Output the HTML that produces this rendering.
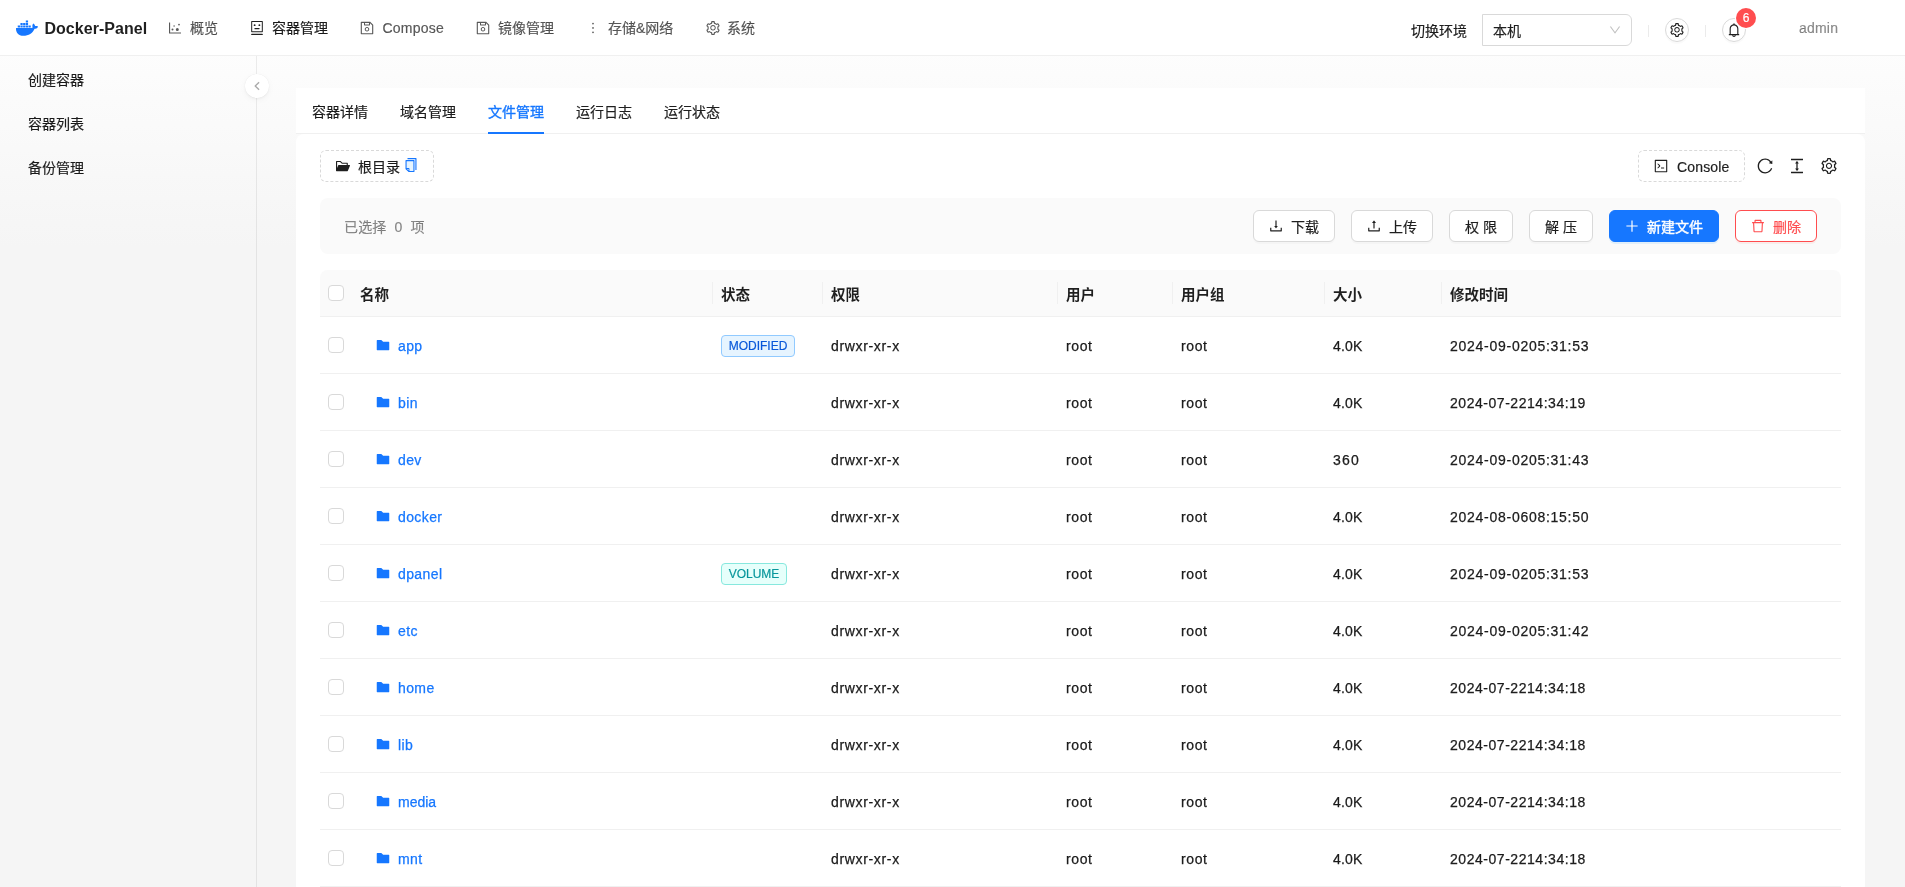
<!DOCTYPE html>
<html lang="zh-CN">
<head>
<meta charset="utf-8">
<title>Docker-Panel</title>
<style>
*{box-sizing:border-box;margin:0;padding:0}
html,body{width:1905px;height:887px;overflow:hidden}
body{-webkit-text-stroke:.18px currentColor;font-family:"Liberation Sans","Noto Sans CJK SC",sans-serif;font-size:14px;color:rgba(0,0,0,.88);background:linear-gradient(#fff,#f5f5f5 28%);position:relative}
svg{display:block}
#app{position:absolute;left:0;top:0;width:1905px;height:887px;will-change:transform}
.abs{position:absolute}
.i{position:absolute}
/* header */
#hdr{position:absolute;left:0;top:0;width:1905px;height:56px;background:#fff;border-bottom:1px solid #f0f0f0;color:rgba(0,0,0,.65)}
#hdr .t{position:absolute;top:0;height:56px;line-height:56px;white-space:nowrap;color:rgba(0,0,0,.65);font-size:14px}
#logo-t{-webkit-text-stroke:0;position:absolute;left:44px;top:0;height:56px;line-height:57px;font-size:16px;font-weight:700;color:rgba(0,0,0,.88);white-space:nowrap}
.circ{position:absolute;width:24px;height:24px;border:1px solid #d9d9d9;border-radius:50%;background:#fff;box-shadow:0 2px 0 rgba(0,0,0,.02)}
.badge{position:absolute;left:1736px;top:8px;width:20px;height:20px;border-radius:10px;background:#ff4d4f;color:#fff;font-size:12px;line-height:21px;text-align:center;box-shadow:0 0 0 1px #fff}
/* sidebar */
#side{position:absolute;left:0;top:56px;width:257px;height:831px;border-right:1px solid rgba(5,5,5,.07)}
#side .m{position:absolute;left:28px;height:22px;line-height:22px;font-size:14px;color:rgba(0,0,0,.88);white-space:nowrap}
#col{position:absolute;left:245px;top:74px;width:24px;height:24px;border-radius:50%;background:#fff;box-shadow:0 2px 8px -2px rgba(25,15,15,.07),0 1px 4px -1px rgba(25,15,15,.07),0 0 1px 0 rgba(25,15,15,.1)}
/* main */
#main{position:absolute;left:257px;top:56px;width:1648px;height:831px}
#card{position:absolute;left:296px;top:88px;width:1569px;height:799px}
#cbody{position:absolute;left:0;top:46px;width:1569px;height:760px;background:#fff;border-radius:8px}
#tabs{position:absolute;left:0;top:0;width:1569px;height:46px;background:#fff;border-bottom:1px solid #f0f0f0}
#tabs .tab{position:absolute;top:13px;height:22px;line-height:22px;font-size:14px;white-space:nowrap;color:rgba(0,0,0,.88)}
#tabs .tab.on{color:#1677ff;-webkit-text-stroke:.35px currentColor}
#ink{position:absolute;left:192px;top:44px;width:56px;height:2px;background:#1677ff}
.dash{position:absolute;border:1px dashed #d9d9d9;border-radius:6px;background:#fff;height:32px;line-height:30px;font-size:14px;white-space:nowrap}
#bar{position:absolute;left:24px;top:110px;width:1521px;height:56px;background:#fafafa;border-radius:8px}
.btn{position:absolute;top:12px;height:32px;border:1px solid #d9d9d9;border-radius:6px;background:#fff;font-size:14px;line-height:30px;white-space:nowrap;box-shadow:0 2px 0 rgba(0,0,0,.02);color:rgba(0,0,0,.88)}
.btn span{position:absolute;top:1px}
.btn.pri span{-webkit-text-stroke:.4px currentColor}
.btn.pri{background:#1677ff;border-color:#1677ff;color:#fff;box-shadow:0 2px 0 rgba(5,145,255,.1)}
.btn.dng{border-color:#ff4d4f;color:#ff4d4f;box-shadow:0 2px 0 rgba(255,38,5,.06)}
/* table */
#th{position:absolute;left:24px;top:182px;width:1521px;height:47px;background:#fafafa;border-bottom:1px solid #f0f0f0;border-radius:8px 8px 0 0}
#th .h{position:absolute;top:14px;height:22px;line-height:22px;font-weight:700;font-size:14.5px;white-space:nowrap;-webkit-text-stroke:0}
#th .sp{position:absolute;top:12px;width:1px;height:22px;background:#f0f0f0}
.cb{position:absolute;width:16px;height:16px;border:1px solid #d9d9d9;border-radius:4px;background:#fff}
.row{position:absolute;left:24px;width:1521px;height:57px;border-bottom:1px solid #f0f0f0}
.row .c{-webkit-text-stroke:.25px currentColor;position:absolute;top:18px;height:22px;line-height:22px;font-size:14px;white-space:nowrap;color:rgba(0,0,0,.88)}
.row .n{color:#1677ff;letter-spacing:.4px}
.row .p{letter-spacing:.66px}
.row .u{letter-spacing:.6px;margin-left:1px}
.row .z{letter-spacing:.2px;margin-left:1px}
.row .d{letter-spacing:.73px;margin-left:1px}
.tag{position:absolute;left:401px;top:18px;height:22px;line-height:20px;font-size:12px;text-align:center;border-radius:4px;border:1px solid;white-space:nowrap}
.tag.b{color:#0958d9;background:#e6f4ff;border-color:#91caff}
.tag.c2{color:#08979c;background:#e6fffb;border-color:#87e8de}

</style>
</head>
<body>
<div id="app">
<div id="main"></div>
<div id="side">
  <div class="m" style="top:13px">创建容器</div>
  <div class="m" style="top:57px">容器列表</div>
  <div class="m" style="top:101px">备份管理</div>
</div>
<div id="hdr">
  <svg class="i" style="left:16px;top:17px" width="22" height="22" viewBox="64 64 896 896" fill="#1677ff"><path d="M555.88 488.24h-92.62v-82.79h92.62zm0-286.24h-92.62v85.59h92.62zm109.45 203.45H572.700v82.79h92.620zm-218.900-101.020h-92.610v84.180h92.600zm109.450 0h-92.610v84.180h92.600zm388.690 140.300c-19.650-14.020-67.360-18.230-102.440-11.220-4.210-33.670-23.850-63.140-57.530-89.800l-19.650-12.620-12.620 19.640c-25.260 39.290-32.280 103.830-5.620 145.920-12.630 7.020-36.480 15.440-67.350 15.440H67.560c-12.630 71.560 8.420 164.160 61.740 227.300C181.220 801.130 259.800 832 360.830 832c220.300 0 384.480-101.020 460.250-286.240 29.470 0 95.420 0 127.700-63.140 1.400-2.800 9.820-18.240 11.220-23.850zm-717.040-39.280h-92.610v82.790h92.600zm109.450 0h-92.610v82.790h92.600zm109.450 0h-92.610v82.790h92.600zM336.980 304.430h-92.610v84.190h92.600z"/></svg>
  <div id="logo-t" style="left:44.4px;letter-spacing:.05px">Docker-Panel</div>
  <svg class="i" style="left:168px;top:21px" width="14" height="14" viewBox="64 64 896 896" fill="currentColor"><path d="M888 792H200V168c0-4.400-3.600-8-8-8h-56c-4.400 0-8 3.600-8 8v688c0 4.400 3.600 8 8 8h752c4.400 0 8-3.600 8-8v-56c0-4.400-3.600-8-8-8zM288 604a64 64 0 1 0 128 0 64 64 0 1 0-128 0zm118-224a48 48 0 1 0 96 0 48 48 0 1 0-96 0zm158 228a96 96 0 1 0 192 0 96 96 0 1 0-192 0zm148-314a56 56 0 1 0 112 0 56 56 0 1 0-112 0z"/></svg>
  <div class="t" style="left:190px">概览</div>
  <svg class="i" style="left:250px;top:21px" width="14" height="14" viewBox="64 64 896 896" fill="rgba(0,0,0,.88)"><path d="M300 328a60 60 0 1 0 120 0 60 60 0 1 0-120 0zM852 64H172c-17.700 0-32 14.300-32 32v660c0 17.700 14.300 32 32 32h680c17.700 0 32-14.300 32-32V96c0-17.700-14.300-32-32-32zm-32 660H204V128h616v596zM604 328a60 60 0 1 0 120 0 60 60 0 1 0-120 0zm250.200 556H169.800c-16.500 0-29.800 14.300-29.800 32v36c0 4.400 3.300 8 7.400 8h729.100c4.100 0 7.400-3.600 7.400-8v-36c.1-17.700-13.200-32-29.700-32zM664 508H360c-4.400 0-8 3.600-8 8v60c0 4.400 3.600 8 8 8h304c4.400 0 8-3.600 8-8v-60c0-4.400-3.600-8-8-8z"/></svg>
  <div class="t" style="left:272px;color:rgba(0,0,0,.88)">容器管理</div>
  <svg class="i" style="left:360px;top:21px" width="14" height="14" viewBox="64 64 896 896" fill="currentColor"><path d="M893.300 293.300L730.700 130.700c-7.500-7.500-16.700-13-26.700-16V112H144c-17.700 0-32 14.300-32 32v736c0 17.700 14.300 32 32 32h736c17.700 0 32-14.300 32-32V338.500c0-17-6.700-33.200-18.700-45.200zM384 184h256v104H384V184zm456 656H184V184h136v136c0 17.700 14.300 32 32 32h320c17.700 0 32-14.300 32-32V205.800l136 136V840zM512 442c-79.500 0-144 64.500-144 144s64.500 144 144 144 144-64.500 144-144-64.500-144-144-144zm0 224c-44.200 0-80-35.800-80-80s35.800-80 80-80 80 35.800 80 80-35.800 80-80 80z"/></svg>
  <div class="t" style="left:382.4px;letter-spacing:.26px">Compose</div>
  <svg class="i" style="left:476px;top:21px" width="14" height="14" viewBox="64 64 896 896" fill="currentColor"><path d="M893.300 293.300L730.700 130.700c-7.500-7.500-16.700-13-26.700-16V112H144c-17.700 0-32 14.300-32 32v736c0 17.700 14.300 32 32 32h736c17.700 0 32-14.300 32-32V338.500c0-17-6.700-33.200-18.700-45.200zM384 184h256v104H384V184zm456 656H184V184h136v136c0 17.700 14.300 32 32 32h320c17.700 0 32-14.300 32-32V205.800l136 136V840zM512 442c-79.500 0-144 64.500-144 144s64.500 144 144 144 144-64.500 144-144-64.500-144-144-144zm0 224c-44.200 0-80-35.800-80-80s35.800-80 80-80 80 35.800 80 80-35.800 80-80 80z"/></svg>
  <div class="t" style="left:498px">镜像管理</div>
  <svg class="i" style="left:586px;top:21px" width="14" height="14" viewBox="64 64 896 896" fill="currentColor"><path d="M456 231a56 56 0 1 0 112 0 56 56 0 1 0-112 0zm0 280a56 56 0 1 0 112 0 56 56 0 1 0-112 0zm0 280a56 56 0 1 0 112 0 56 56 0 1 0-112 0z"/></svg>
  <div class="t" style="left:608px">存储&amp;网络</div>
  <svg class="i" style="left:706px;top:21px" width="14" height="14" viewBox="64 64 896 896" fill="currentColor"><path d="M924.8 625.7l-65.5-56c3.100-19 4.700-38.400 4.700-57.800s-1.600-38.800-4.700-57.800l65.500-56a32.030 32.030 0 0 0 9.300-35.200l-.9-2.600a442.090 442.090 0 0 0-79.700-137.900l-1.800-2.100a32.120 32.120 0 0 0-35.100-9.500l-81.300 28.900c-30-24.600-63.500-44-99.700-57.600l-15.700-85a32.050 32.050 0 0 0-25.800-25.700l-2.700-.5c-52.100-9.400-106.900-9.400-159 0l-2.700.5a32.050 32.050 0 0 0-25.800 25.700l-15.800 85.400a351.860 351.860 0 0 0-99 57.400l-81.900-29.100a32 32 0 0 0-35.100 9.500l-1.800 2.100a446.020 446.020 0 0 0-79.700 137.900l-.9 2.600c-4.500 12.500-.8 26.500 9.300 35.200l66.300 56.600c-3.100 18.800-4.600 38-4.600 57.100 0 19.200 1.500 38.400 4.600 57.100L99 625.500a32.030 32.030 0 0 0-9.300 35.200l.9 2.600c18.100 50.400 44.900 96.900 79.700 137.900l1.800 2.100a32.120 32.120 0 0 0 35.100 9.500l81.900-29.100c29.800 24.500 63.100 43.900 99 57.400l15.800 85.400a32.050 32.050 0 0 0 25.800 25.700l2.700.5a449.400 449.400 0 0 0 159 0l2.700-.5a32.050 32.050 0 0 0 25.800-25.700l15.700-85a350 350 0 0 0 99.700-57.600l81.300 28.900a32 32 0 0 0 35.100-9.500l1.800-2.100c34.800-41.100 61.600-87.500 79.700-137.900l.9-2.600c4.500-12.300.8-26.300-9.300-35zM788.300 465.900c2.500 15.100 3.800 30.600 3.800 46.100s-1.300 31-3.800 46.100l-6.600 40.100 74.700 63.900a370.030 370.030 0 0 1-42.600 73.600L721 702.800l-31.400 25.800c-23.900 19.600-50.500 35-79.300 45.800l-38.100 14.300-17.900 97a377.500 377.500 0 0 1-85 0l-17.900-97.200-37.800-14.500c-28.500-10.800-55-26.200-78.700-45.700l-31.400-25.900-93.400 33.200c-17-22.900-31.200-47.600-42.600-73.600l75.500-64.500-6.500-40c-2.400-14.900-3.700-30.300-3.700-45.500 0-15.300 1.200-30.600 3.700-45.500l6.500-40-75.500-64.500c11.300-26.100 25.600-50.700 42.600-73.600l93.400 33.200 31.400-25.900c23.700-19.500 50.200-34.900 78.700-45.700l37.900-14.300 17.900-97.200c28.100-3.200 56.800-3.200 85 0l17.900 97 38.100 14.300c28.700 10.800 55.400 26.200 79.300 45.800l31.400 25.800 92.800-32.900c17 22.900 31.200 47.600 42.600 73.600L781.800 426l6.500 39.900zM512 326c-97.200 0-176 78.800-176 176s78.800 176 176 176 176-78.800 176-176-78.800-176-176-176zm79.200 255.200A111.600 111.600 0 0 1 512 614c-29.900 0-58-11.700-79.200-32.800A111.600 111.600 0 0 1 400 502c0-29.900 11.700-58 32.800-79.200C454 401.600 482.100 390 512 390c29.900 0 58 11.600 79.200 32.800A111.600 111.600 0 0 1 624 502c0 29.900-11.700 58-32.800 79.200z"/></svg>
  <div class="t" style="left:727px">系统</div>
  <div class="t" style="left:1411px;color:rgba(0,0,0,.88);line-height:63px">切换环境</div>
  <div class="abs" style="left:1482px;top:14px;width:150px;height:32px;border:1px solid #d9d9d9;border-radius:0 6px 6px 0;background:#fff"></div>
  <div class="t" style="left:1493px;color:rgba(0,0,0,.88);line-height:63px">本机</div>
  <svg class="i" style="left:1609px;top:24px" width="12" height="12" viewBox="64 64 896 896" fill="rgba(0,0,0,.25)"><path d="M884 256h-75c-5.100 0-9.900 2.500-12.900 6.600L512 654.200 227.900 262.600c-3-4.100-7.800-6.600-12.900-6.600h-75c-6.500 0-10.300 7.400-6.500 12.700l352.600 486.100c12.800 17.600 39 17.600 51.700 0l352.600-486.100c3.900-5.300.1-12.700-6.400-12.700z"/></svg>
  <div class="abs" style="left:1648px;top:25px;width:1px;height:12px;background:#ebebeb"></div>
  <div class="circ" style="left:1665px;top:18px"><svg class="i" style="left:4px;top:4px" width="14" height="14" viewBox="64 64 896 896" fill="rgba(0,0,0,.88)"><path d="M924.8 625.7l-65.5-56c3.100-19 4.700-38.400 4.700-57.800s-1.600-38.800-4.700-57.800l65.500-56a32.030 32.030 0 0 0 9.300-35.200l-.9-2.600a442.090 442.090 0 0 0-79.700-137.900l-1.800-2.100a32.120 32.120 0 0 0-35.100-9.500l-81.300 28.900c-30-24.600-63.500-44-99.700-57.600l-15.700-85a32.050 32.050 0 0 0-25.800-25.700l-2.700-.5c-52.100-9.400-106.900-9.400-159 0l-2.700.5a32.050 32.050 0 0 0-25.800 25.700l-15.800 85.400a351.860 351.860 0 0 0-99 57.400l-81.900-29.100a32 32 0 0 0-35.100 9.500l-1.800 2.100a446.020 446.020 0 0 0-79.700 137.900l-.9 2.600c-4.500 12.500-.8 26.500 9.300 35.200l66.300 56.600c-3.100 18.800-4.600 38-4.600 57.100 0 19.200 1.500 38.400 4.600 57.100L99 625.500a32.030 32.030 0 0 0-9.300 35.200l.9 2.600c18.100 50.400 44.900 96.900 79.700 137.900l1.800 2.100a32.120 32.120 0 0 0 35.100 9.500l81.900-29.100c29.800 24.500 63.100 43.900 99 57.400l15.800 85.400a32.050 32.050 0 0 0 25.800 25.700l2.700.5a449.400 449.400 0 0 0 159 0l2.700-.5a32.050 32.050 0 0 0 25.800-25.700l15.700-85a350 350 0 0 0 99.700-57.600l81.300 28.900a32 32 0 0 0 35.100-9.500l1.800-2.100c34.800-41.100 61.600-87.500 79.700-137.900l.9-2.600c4.500-12.300.8-26.300-9.300-35zM788.300 465.900c2.500 15.100 3.800 30.600 3.800 46.100s-1.300 31-3.800 46.100l-6.600 40.100 74.700 63.900a370.030 370.030 0 0 1-42.600 73.600L721 702.800l-31.400 25.800c-23.900 19.600-50.500 35-79.300 45.800l-38.100 14.300-17.900 97a377.500 377.500 0 0 1-85 0l-17.900-97.200-37.800-14.500c-28.500-10.800-55-26.200-78.700-45.700l-31.400-25.900-93.400 33.200c-17-22.900-31.200-47.600-42.600-73.600l75.500-64.500-6.500-40c-2.400-14.900-3.700-30.300-3.700-45.500 0-15.300 1.200-30.600 3.700-45.500l6.500-40-75.500-64.500c11.300-26.100 25.600-50.700 42.600-73.600l93.400 33.200 31.400-25.900c23.700-19.500 50.200-34.900 78.700-45.700l37.900-14.300 17.900-97.200c28.100-3.200 56.800-3.200 85 0l17.900 97 38.100 14.300c28.700 10.800 55.400 26.200 79.300 45.800l31.400 25.800 92.800-32.900c17 22.900 31.200 47.600 42.600 73.600L781.800 426l6.500 39.900zM512 326c-97.200 0-176 78.800-176 176s78.800 176 176 176 176-78.800 176-176-78.800-176-176-176zm79.200 255.200A111.600 111.600 0 0 1 512 614c-29.900 0-58-11.700-79.200-32.800A111.600 111.600 0 0 1 400 502c0-29.900 11.700-58 32.800-79.200C454 401.600 482.100 390 512 390c29.900 0 58 11.600 79.200 32.800A111.600 111.600 0 0 1 624 502c0 29.900-11.700 58-32.800 79.200z"/></svg></div>
  <div class="abs" style="left:1705px;top:25px;width:1px;height:12px;background:#ebebeb"></div>
  <div class="circ" style="left:1722px;top:18px"><svg class="i" style="left:4px;top:4px" width="14" height="14" viewBox="64 64 896 896" fill="rgba(0,0,0,.88)"><path d="M816 768h-24V428c0-141.100-104.300-257.700-240-277.100V112c0-22.100-17.900-40-40-40s-40 17.900-40 40v38.900c-135.700 19.400-240 136-240 277.100v340h-24c-17.700 0-32 14.300-32 32v32c0 4.400 3.600 8 8 8h216c0 61.800 50.200 112 112 112s112-50.200 112-112h216c4.400 0 8-3.600 8-8v-32c0-17.700-14.300-32-32-32zM512 888c-26.500 0-48-21.500-48-48h96c0 26.500-21.500 48-48 48zM304 768V428c0-55.600 21.600-107.800 60.900-147.100S456.400 220 512 220c55.600 0 107.800 21.600 147.100 60.900S720 372.400 720 428v340H304z"/></svg></div>
  <div class="badge">6</div>
  <div class="t" style="left:1799px;color:rgba(0,0,0,.45);letter-spacing:.2px">admin</div>
</div>
<div id="col"><svg class="i" style="left:5px;top:5px;transform:rotate(90deg)" width="14" height="14" viewBox="0 0 12 12" fill="rgba(0,0,0,.33)"><path d="M6.432 7.967a.448.448 0 01-.318.133h-.228a.46.46 0 01-.318-.133L2.488 4.85a.305.305 0 010-.43l.427-.43a.293.293 0 01.42 0L6 6.687l2.665-2.699a.299.299 0 01.426 0l.42.431a.305.305 0 010 .43L6.432 7.967z"/></svg></div>
<div id="card">
  <div id="cbody"></div>
  <div id="tabs">
    <div class="tab" style="left:16px">容器详情</div>
    <div class="tab" style="left:104px">域名管理</div>
    <div class="tab on" style="left:192px">文件管理</div>
    <div class="tab" style="left:280px">运行日志</div>
    <div class="tab" style="left:368px">运行状态</div>
    <div id="ink"></div>
  </div>
  <div class="dash" style="left:24px;top:62px;width:114px"><svg class="i" style="left:15px;top:8px" width="14" height="14" viewBox="64 64 896 896" fill="rgba(0,0,0,.88)"><path d="M928 444H820V330.400c0-17.700-14.300-32-32-32H473L355.700 186.200a8.150 8.150 0 0 0-5.500-2.200H96c-17.700 0-32 14.300-32 32v592c0 17.700 14.300 32 32 32h698c13 0 24.800-7.900 29.700-20l134-332c1.500-3.800 2.300-7.900 2.300-12 0-17.700-14.300-32-32-32zm-180 0H238c-13 0-24.800 7.900-29.700 20L136 643.200V256h188.500l119.600 114.400H748V444z"/></svg><span class="abs" style="left:37px;top:1px">根目录</span><svg class="i" style="left:83px;top:7px" width="14" height="14" viewBox="64 64 896 896"><path fill="#e6f4ff" d="M232 706h142c22.100 0 40 17.900 40 40v142h250V264H232v442z"/><path fill="#1677ff" d="M832 64H296c-4.400 0-8 3.600-8 8v56c0 4.400 3.600 8 8 8h496v688c0 4.400 3.600 8 8 8h56c4.400 0 8-3.600 8-8V96c0-17.700-14.300-32-32-32z"/><path fill="#1677ff" d="M704 192H192c-17.700 0-32 14.300-32 32v530.700c0 8.500 3.400 16.600 9.400 22.600l173.300 173.300c2.200 2.200 4.700 4 7.400 5.500v1.900h4.200c3.500 1.300 7.200 2 11 2H704c17.700 0 32-14.300 32-32V224c0-17.700-14.300-32-32-32zM350 856.200L263.900 770H350v86.200zM664 888H414V746c0-22.100-17.900-40-40-40H232V264h432v624z"/></svg></div>
  <div class="dash" style="left:1342px;top:62px;width:107px"><svg class="i" style="left:15px;top:8px" width="14" height="14" viewBox="64 64 896 896" fill="rgba(0,0,0,.88)"><path d="M455.300 465.500l-143-121c-5.200-4.400-13.300-.7-13.300 6.100v62.800c0 2.400 1.100 4.700 2.900 6.200l101.500 85.900-101.500 85.900c-1.800 1.500-2.900 3.800-2.900 6.200v62.800c0 6.800 8.100 10.500 13.300 6.100l143-121c7.600-6.400 7.600-18 0-24.400zM704 608H520c-4.400 0-8 3.600-8 8v48c0 4.400 3.600 8 8 8h184c4.400 0 8-3.600 8-8v-48c0-4.400-3.600-8-8-8zm176-496H144c-17.700 0-32 14.300-32 32v736c0 17.700 14.300 32 32 32h736c17.700 0 32-14.300 32-32V144c0-17.700-14.300-32-32-32zm-40 728H184V184h656v656z"/></svg><span class="abs" style="left:38px;top:1px;letter-spacing:.15px">Console</span></div>
  <svg class="i" style="left:1461px;top:70px" width="16" height="16" viewBox="64 64 896 896" fill="rgba(0,0,0,.88)"><path d="M909.1 209.300l-56.400 44.100C775.800 155.100 656.200 92 521.900 92 290 92 102.300 279.500 102 511.500 101.700 743.700 289.800 932 521.900 932c181.300 0 335.800-115 394.600-276.100 1.500-4.200-.7-8.900-4.900-10.300l-56.700-19.500a8 8 0 0 0-10.100 4.800c-1.800 5-3.800 10-5.900 14.900-17.300 41-42.100 77.800-73.700 109.400A344.770 344.770 0 0 1 655.900 829c-42.300 17.900-87.400 27-133.800 27-46.500 0-91.500-9.100-133.800-27A341.500 341.500 0 0 1 279 755.200a342.160 342.160 0 0 1-73.700-109.400c-17.900-42.400-27-87.400-27-133.900s9.100-91.500 27-133.900c17.300-41 42.100-77.800 73.700-109.400 31.600-31.600 68.400-56.400 109.300-73.800 42.300-17.900 87.400-27 133.800-27 46.500 0 91.500 9.100 133.800 27a341.500 341.500 0 0 1 109.300 73.800c9.900 9.900 19.200 20.400 27.800 31.400l-60.200 47a8 8 0 0 0 3 14.100l175.600 43c5 1.200 9.900-2.600 9.900-7.700l.8-180.900c-.1-6.600-7.800-10.300-13-6.200z"/></svg>
  <svg class="i" style="left:1493px;top:70px" width="16" height="16" viewBox="64 64 896 896" fill="rgba(0,0,0,.88)"><path d="M840 836H184c-4.400 0-8 3.600-8 8v60c0 4.400 3.600 8 8 8h656c4.400 0 8-3.600 8-8v-60c0-4.400-3.600-8-8-8zm0-724H184c-4.400 0-8 3.600-8 8v60c0 4.400 3.600 8 8 8h656c4.400 0 8-3.600 8-8v-60c0-4.400-3.600-8-8-8zM610.800 378c6 0 9.400-7 5.700-11.700L515.700 238.700a7.140 7.140 0 0 0-11.300 0L403.600 366.300a7.230 7.230 0 0 0 5.700 11.700H476v268h-62.800c-6 0-9.400 7-5.700 11.700l100.800 127.500c2.900 3.700 8.500 3.700 11.300 0l100.800-127.500c3.700-4.700.4-11.700-5.700-11.700H548V378h62.800z"/></svg>
  <svg class="i" style="left:1525px;top:70px" width="16" height="16" viewBox="64 64 896 896" fill="rgba(0,0,0,.88)"><path d="M924.8 625.7l-65.5-56c3.100-19 4.700-38.400 4.700-57.800s-1.600-38.800-4.700-57.800l65.500-56a32.030 32.030 0 0 0 9.300-35.200l-.9-2.600a442.090 442.090 0 0 0-79.700-137.900l-1.800-2.100a32.120 32.120 0 0 0-35.100-9.500l-81.300 28.900c-30-24.600-63.500-44-99.700-57.600l-15.700-85a32.050 32.050 0 0 0-25.800-25.700l-2.700-.5c-52.100-9.400-106.900-9.400-159 0l-2.700.5a32.050 32.050 0 0 0-25.800 25.700l-15.800 85.400a351.860 351.860 0 0 0-99 57.400l-81.900-29.100a32 32 0 0 0-35.100 9.500l-1.800 2.100a446.020 446.020 0 0 0-79.700 137.900l-.9 2.600c-4.500 12.500-.8 26.500 9.300 35.200l66.300 56.600c-3.100 18.800-4.600 38-4.600 57.100 0 19.200 1.500 38.400 4.600 57.100L99 625.500a32.030 32.030 0 0 0-9.300 35.200l.9 2.600c18.100 50.400 44.900 96.900 79.700 137.900l1.800 2.100a32.120 32.120 0 0 0 35.100 9.500l81.900-29.100c29.800 24.500 63.100 43.900 99 57.400l15.800 85.400a32.050 32.050 0 0 0 25.800 25.700l2.700.5a449.400 449.400 0 0 0 159 0l2.700-.5a32.050 32.050 0 0 0 25.800-25.700l15.700-85a350 350 0 0 0 99.700-57.600l81.300 28.900a32 32 0 0 0 35.100-9.500l1.800-2.100c34.800-41.100 61.600-87.500 79.700-137.900l.9-2.600c4.500-12.300.8-26.300-9.300-35zM788.300 465.900c2.500 15.100 3.800 30.600 3.800 46.100s-1.300 31-3.800 46.100l-6.600 40.100 74.700 63.900a370.030 370.030 0 0 1-42.600 73.600L721 702.800l-31.400 25.800c-23.900 19.600-50.500 35-79.300 45.800l-38.100 14.300-17.900 97a377.500 377.500 0 0 1-85 0l-17.900-97.200-37.800-14.500c-28.500-10.800-55-26.200-78.700-45.700l-31.400-25.900-93.400 33.200c-17-22.900-31.200-47.600-42.600-73.600l75.500-64.500-6.500-40c-2.400-14.900-3.700-30.300-3.700-45.500 0-15.300 1.200-30.600 3.700-45.500l6.500-40-75.500-64.500c11.300-26.100 25.600-50.700 42.600-73.600l93.400 33.200 31.400-25.900c23.700-19.500 50.200-34.900 78.700-45.700l37.900-14.300 17.900-97.200c28.100-3.200 56.800-3.200 85 0l17.900 97 38.100 14.300c28.700 10.800 55.400 26.200 79.300 45.800l31.400 25.800 92.800-32.900c17 22.900 31.200 47.600 42.600 73.600L781.800 426l6.500 39.900zM512 326c-97.200 0-176 78.800-176 176s78.800 176 176 176 176-78.800 176-176-78.800-176-176-176zm79.200 255.200A111.600 111.600 0 0 1 512 614c-29.900 0-58-11.700-79.200-32.800A111.600 111.600 0 0 1 400 502c0-29.900 11.700-58 32.800-79.200C454 401.600 482.100 390 512 390c29.900 0 58 11.600 79.200 32.800A111.600 111.600 0 0 1 624 502c0 29.900-11.700 58-32.800 79.200z"/></svg>
  <div id="bar">
    <div class="abs" style="left:24px;top:18px;height:22px;line-height:22px;color:rgba(0,0,0,.45);white-space:pre;letter-spacing:.15px">已选择  0  项</div>
    <div class="btn" style="left:933px;width:82px"><svg class="i" style="left:15px;top:8px" width="14" height="14" viewBox="64 64 896 896" fill="currentColor"><path d="M505.700 661a8 8 0 0 0 12.600 0l112-141.700c4.100-5.200.4-12.900-6.300-12.900h-74.100V168c0-4.400-3.600-8-8-8h-60c-4.400 0-8 3.600-8 8v338.300H400c-6.700 0-10.400 7.700-6.300 12.900l112 141.800zM878 626h-60c-4.400 0-8 3.600-8 8v154H214V634c0-4.400-3.600-8-8-8h-60c-4.400 0-8 3.600-8 8v198c0 17.700 14.300 32 32 32h684c17.700 0 32-14.300 32-32V634c0-4.400-3.600-8-8-8z"/></svg><span style="left:37px">下载</span></div>
    <div class="btn" style="left:1031px;width:82px"><svg class="i" style="left:15px;top:8px" width="14" height="14" viewBox="64 64 896 896" fill="currentColor"><path d="M400 317.700h73.900V656c0 4.400 3.600 8 8 8h60c4.400 0 8-3.600 8-8V317.700H624c6.700 0 10.400-7.700 6.300-12.900L518.300 163a8 8 0 0 0-12.600 0l-112 141.700c-4.100 5.300-.4 13 6.300 13zM878 626h-60c-4.400 0-8 3.600-8 8v154H214V634c0-4.400-3.600-8-8-8h-60c-4.400 0-8 3.600-8 8v198c0 17.700 14.300 32 32 32h684c17.700 0 32-14.300 32-32V634c0-4.400-3.600-8-8-8z"/></svg><span style="left:37px">上传</span></div>
    <div class="btn" style="left:1129px;width:64px"><span style="left:15px">权 限</span></div>
    <div class="btn" style="left:1209px;width:64px"><span style="left:15px">解 压</span></div>
    <div class="btn pri" style="left:1289px;width:110px"><svg class="i" style="left:15px;top:8px" width="14" height="14" viewBox="64 64 896 896" fill="currentColor"><path d="M482 152h60q8 0 8 8v704q0 8-8 8h-60q-8 0-8-8V160q0-8 8-8zM192 474h672q8 0 8 8v60q0 8-8 8H160q-8 0-8-8v-60q0-8 8-8z"/></svg><span style="left:37px">新建文件</span></div>
    <div class="btn dng" style="left:1415px;width:82px"><svg class="i" style="left:15px;top:8px" width="14" height="14" viewBox="64 64 896 896" fill="currentColor"><path d="M360 184h-8c4.400 0 8-3.600 8-8v8h304v-8c0 4.400 3.600 8 8 8h-8v72h72v-80c0-35.300-28.700-64-64-64H352c-35.300 0-64 28.700-64 64v80h72v-72zm504 72H160c-17.700 0-32 14.300-32 32v32c0 4.400 3.600 8 8 8h60.400l24.700 523c1.600 34.100 29.800 61 63.900 61h454c34.200 0 62.300-26.800 63.900-61l24.700-523H888c4.400 0 8-3.600 8-8v-32c0-17.700-14.300-32-32-32zM731.300 840H292.700l-24.200-512h487l-24.200 512z"/></svg><span style="left:37px">删除</span></div>
  </div>
  <div id="th">
    <div class="cb" style="left:8px;top:15px"></div>
    <div class="h" style="left:40px">名称</div>
    <div class="sp" style="left:392px"></div><div class="h" style="left:401px">状态</div>
    <div class="sp" style="left:502px"></div><div class="h" style="left:511px">权限</div>
    <div class="sp" style="left:737px"></div><div class="h" style="left:746px">用户</div>
    <div class="sp" style="left:852px"></div><div class="h" style="left:861px">用户组</div>
    <div class="sp" style="left:1004px"></div><div class="h" style="left:1013px">大小</div>
    <div class="sp" style="left:1121px"></div><div class="h" style="left:1130px">修改时间</div>
  </div>
  <div id="rows">
    <div class="row" style="top:229px"><div class="cb" style="left:8px;top:20px"></div><svg class="i" style="left:56px;top:21px" width="14" height="14" viewBox="64 64 896 896" fill="#1677ff"><path d="M880 298.400H521L403.700 186.200a8.150 8.150 0 0 0-5.500-2.200H144c-17.700 0-32 14.300-32 32v592c0 17.700 14.300 32 32 32h736c17.700 0 32-14.300 32-32V330.400c0-17.700-14.300-32-32-32z"/></svg><div class="c n" style="left:78px">app</div><span class="tag b" style="width:74px">MODIFIED</span><div class="c p" style="left:511px">drwxr-xr-x</div><div class="c u" style="left:745px">root</div><div class="c u" style="left:860px">root</div><div class="c z" style="left:1012px">4.0K</div><div class="c d" style="left:1129px">2024-09-0205:31:53</div></div>
    <div class="row" style="top:286px"><div class="cb" style="left:8px;top:20px"></div><svg class="i" style="left:56px;top:21px" width="14" height="14" viewBox="64 64 896 896" fill="#1677ff"><path d="M880 298.400H521L403.700 186.200a8.150 8.150 0 0 0-5.500-2.200H144c-17.700 0-32 14.300-32 32v592c0 17.700 14.300 32 32 32h736c17.700 0 32-14.300 32-32V330.400c0-17.700-14.300-32-32-32z"/></svg><div class="c n" style="left:78px">bin</div><div class="c p" style="left:511px">drwxr-xr-x</div><div class="c u" style="left:745px">root</div><div class="c u" style="left:860px">root</div><div class="c z" style="left:1012px">4.0K</div><div class="c d" style="left:1129px;letter-spacing:.54px">2024-07-2214:34:19</div></div>
    <div class="row" style="top:343px"><div class="cb" style="left:8px;top:20px"></div><svg class="i" style="left:56px;top:21px" width="14" height="14" viewBox="64 64 896 896" fill="#1677ff"><path d="M880 298.400H521L403.700 186.200a8.150 8.150 0 0 0-5.500-2.200H144c-17.700 0-32 14.300-32 32v592c0 17.700 14.300 32 32 32h736c17.700 0 32-14.300 32-32V330.400c0-17.700-14.300-32-32-32z"/></svg><div class="c n" style="left:78px">dev</div><div class="c p" style="left:511px">drwxr-xr-x</div><div class="c u" style="left:745px">root</div><div class="c u" style="left:860px">root</div><div class="c z" style="left:1012px;letter-spacing:1.2px">360</div><div class="c d" style="left:1129px">2024-09-0205:31:43</div></div>
    <div class="row" style="top:400px"><div class="cb" style="left:8px;top:20px"></div><svg class="i" style="left:56px;top:21px" width="14" height="14" viewBox="64 64 896 896" fill="#1677ff"><path d="M880 298.400H521L403.700 186.200a8.150 8.150 0 0 0-5.500-2.200H144c-17.700 0-32 14.300-32 32v592c0 17.700 14.300 32 32 32h736c17.700 0 32-14.300 32-32V330.400c0-17.700-14.300-32-32-32z"/></svg><div class="c n" style="left:78px">docker</div><div class="c p" style="left:511px">drwxr-xr-x</div><div class="c u" style="left:745px">root</div><div class="c u" style="left:860px">root</div><div class="c z" style="left:1012px">4.0K</div><div class="c d" style="left:1129px">2024-08-0608:15:50</div></div>
    <div class="row" style="top:457px"><div class="cb" style="left:8px;top:20px"></div><svg class="i" style="left:56px;top:21px" width="14" height="14" viewBox="64 64 896 896" fill="#1677ff"><path d="M880 298.400H521L403.700 186.200a8.150 8.150 0 0 0-5.500-2.200H144c-17.700 0-32 14.300-32 32v592c0 17.700 14.300 32 32 32h736c17.700 0 32-14.300 32-32V330.400c0-17.700-14.300-32-32-32z"/></svg><div class="c n" style="left:78px">dpanel</div><span class="tag c2" style="width:66px">VOLUME</span><div class="c p" style="left:511px">drwxr-xr-x</div><div class="c u" style="left:745px">root</div><div class="c u" style="left:860px">root</div><div class="c z" style="left:1012px">4.0K</div><div class="c d" style="left:1129px">2024-09-0205:31:53</div></div>
    <div class="row" style="top:514px"><div class="cb" style="left:8px;top:20px"></div><svg class="i" style="left:56px;top:21px" width="14" height="14" viewBox="64 64 896 896" fill="#1677ff"><path d="M880 298.400H521L403.700 186.200a8.150 8.150 0 0 0-5.500-2.200H144c-17.700 0-32 14.300-32 32v592c0 17.700 14.300 32 32 32h736c17.700 0 32-14.300 32-32V330.400c0-17.700-14.300-32-32-32z"/></svg><div class="c n" style="left:78px">etc</div><div class="c p" style="left:511px">drwxr-xr-x</div><div class="c u" style="left:745px">root</div><div class="c u" style="left:860px">root</div><div class="c z" style="left:1012px">4.0K</div><div class="c d" style="left:1129px">2024-09-0205:31:42</div></div>
    <div class="row" style="top:571px"><div class="cb" style="left:8px;top:20px"></div><svg class="i" style="left:56px;top:21px" width="14" height="14" viewBox="64 64 896 896" fill="#1677ff"><path d="M880 298.400H521L403.700 186.200a8.150 8.150 0 0 0-5.500-2.200H144c-17.700 0-32 14.300-32 32v592c0 17.700 14.300 32 32 32h736c17.700 0 32-14.300 32-32V330.400c0-17.700-14.300-32-32-32z"/></svg><div class="c n" style="left:78px">home</div><div class="c p" style="left:511px">drwxr-xr-x</div><div class="c u" style="left:745px">root</div><div class="c u" style="left:860px">root</div><div class="c z" style="left:1012px">4.0K</div><div class="c d" style="left:1129px;letter-spacing:.54px">2024-07-2214:34:18</div></div>
    <div class="row" style="top:628px"><div class="cb" style="left:8px;top:20px"></div><svg class="i" style="left:56px;top:21px" width="14" height="14" viewBox="64 64 896 896" fill="#1677ff"><path d="M880 298.400H521L403.700 186.200a8.150 8.150 0 0 0-5.500-2.200H144c-17.700 0-32 14.300-32 32v592c0 17.700 14.300 32 32 32h736c17.700 0 32-14.300 32-32V330.400c0-17.700-14.300-32-32-32z"/></svg><div class="c n" style="left:78px">lib</div><div class="c p" style="left:511px">drwxr-xr-x</div><div class="c u" style="left:745px">root</div><div class="c u" style="left:860px">root</div><div class="c z" style="left:1012px">4.0K</div><div class="c d" style="left:1129px;letter-spacing:.54px">2024-07-2214:34:18</div></div>
    <div class="row" style="top:685px"><div class="cb" style="left:8px;top:20px"></div><svg class="i" style="left:56px;top:21px" width="14" height="14" viewBox="64 64 896 896" fill="#1677ff"><path d="M880 298.400H521L403.700 186.200a8.150 8.150 0 0 0-5.500-2.200H144c-17.700 0-32 14.300-32 32v592c0 17.700 14.300 32 32 32h736c17.700 0 32-14.300 32-32V330.400c0-17.700-14.300-32-32-32z"/></svg><div class="c n" style="left:78px;letter-spacing:0">media</div><div class="c p" style="left:511px">drwxr-xr-x</div><div class="c u" style="left:745px">root</div><div class="c u" style="left:860px">root</div><div class="c z" style="left:1012px">4.0K</div><div class="c d" style="left:1129px;letter-spacing:.54px">2024-07-2214:34:18</div></div>
    <div class="row" style="top:742px"><div class="cb" style="left:8px;top:20px"></div><svg class="i" style="left:56px;top:21px" width="14" height="14" viewBox="64 64 896 896" fill="#1677ff"><path d="M880 298.400H521L403.700 186.200a8.150 8.150 0 0 0-5.500-2.200H144c-17.700 0-32 14.300-32 32v592c0 17.700 14.300 32 32 32h736c17.700 0 32-14.300 32-32V330.400c0-17.700-14.300-32-32-32z"/></svg><div class="c n" style="left:78px">mnt</div><div class="c p" style="left:511px">drwxr-xr-x</div><div class="c u" style="left:745px">root</div><div class="c u" style="left:860px">root</div><div class="c z" style="left:1012px">4.0K</div><div class="c d" style="left:1129px;letter-spacing:.54px">2024-07-2214:34:18</div></div>
  </div>
</div>
</div>
</body>
</html>
